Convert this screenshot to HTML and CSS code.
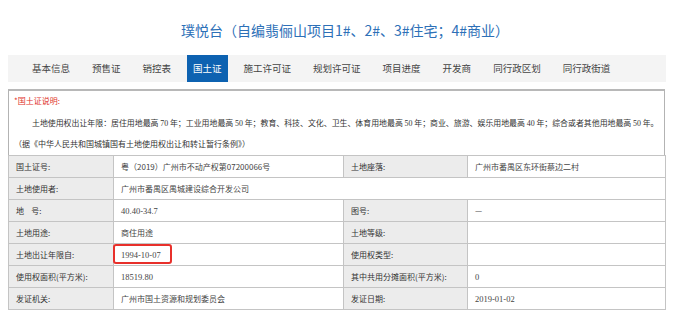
FILE: index.html
```html
<!DOCTYPE html>
<html lang="zh-CN">
<head>
    <meta charset="UTF-8">
    <title>璞悦台 国土证</title>
    <link rel="stylesheet" href="styles.css">
</head>
<body>
    <div class="page">
        <h1 class="title">璞悦台（自编翡俪山项目1#、2#、3#住宅；4#商业）</h1>

        <ul class="tabs">
            <li>基本信息</li>
            <li>预售证</li>
            <li>销控表</li>
            <li class="active">国土证</li>
            <li>施工许可证</li>
            <li>规划许可证</li>
            <li>项目进度</li>
            <li>开发商</li>
            <li>同行政区划</li>
            <li>同行政街道</li>
        </ul>

        <div class="panel">
            <div class="notes">
                <p class="note-title">*国土证说明:</p>
                <p class="note-rule">土地使用权出让年限：居住用地最高 <span class="num">70</span> 年；工业用地最高 <span class="num">50</span> 年；教育、科技、文化、卫生、体育用地最高 <span class="num">50</span> 年；商业、旅游、娱乐用地最高 <span class="num">40</span> 年；综合或者其他用地最高 <span class="num">50</span> 年。</p>
                <p class="note-source">（据《中华人民共和国城镇国有土地使用权出让和转让暂行条例》）</p>
            </div>

            <table class="info">
                <colgroup>
                    <col class="c1"><col class="c2"><col class="c3"><col class="c4">
                </colgroup>
                <tr>
                    <th>国土证号:</th>
                    <td>粤（2019）广州市不动产权第07200066号</td>
                    <th>土地座落:</th>
                    <td>广州市番禺区东环街蔡边二村</td>
                </tr>
                <tr>
                    <th>土地使用者:</th>
                    <td colspan="3">广州市番禺区禺城建设综合开发公司</td>
                </tr>
                <tr>
                    <th>地&nbsp;&nbsp;&nbsp;&nbsp;号:</th>
                    <td class="num">40.40-34.7</td>
                    <th>图号:</th>
                    <td>—</td>
                </tr>
                <tr>
                    <th>土地用途:</th>
                    <td>商住用途</td>
                    <th>土地等级:</th>
                    <td></td>
                </tr>
                <tr>
                    <th>土地出让年限自:</th>
                    <td class="num marked">1994-10-07<span class="mark"></span></td>
                    <th>使用权类型:</th>
                    <td></td>
                </tr>
                <tr>
                    <th>使用权面积(平方米):</th>
                    <td class="num">18519.80</td>
                    <th>其中共用分摊面积(平方米):</th>
                    <td class="num">0</td>
                </tr>
                <tr>
                    <th>发证机关:</th>
                    <td>广州市国土资源和规划委员会</td>
                    <th>发证日期:</th>
                    <td class="num">2019-01-02</td>
                </tr>
            </table>
        </div>
    </div>
</body>
</html>
```

FILE: styles.css
```css
body {
    margin: 0;
    background: #fff;
    font-family: "Noto Sans CJK SC", "Liberation Sans", sans-serif;
    color: #333;
}

.page {
    width: 700px;
    height: 319px;
    overflow: hidden;
}

.title {
    margin: 0 0 0 -10px;
    padding-top: 20px;
    height: 20px;
    line-height: 20px;
    text-align: center;
    font-size: 14px;
    font-weight: normal;
    color: #2d70b7;
}

.tabs {
    list-style: none;
    display: flex;
    margin: 15px 0 0 8px;
    padding: 0 0 0 13px;
    width: 645px;
    height: 27px;
    background-color: #f4f4f4;
}

.tabs li {
    padding: 0 6px;
    margin: 0 5px;
    line-height: 27px;
    font-size: 9.5px;
    color: #444;
    white-space: nowrap;
}

.tabs li.active {
    background-color: #0d62b1;
    color: #fff;
}

.panel {
    margin: 7px 0 0 8px;
    width: 655px;
    border: 1px solid #b3b3b3;
    border-top: 2px solid #b8b8b8;
}

.notes {
    padding: 0 6px 2px 5px;
    font-size: 8px;
    color: #333;
}

.notes p {
    margin: 0;
}

.note-title {
    height: 20px;
    line-height: 20px;
    color: #e0332c;
}

.note-rule {
    margin-top: 2px !important;
    line-height: 20px;
    text-indent: 18px;
    white-space: nowrap;
    font-size: 7.92px;
}

.note-source {
    line-height: 19px;
}

.num {
    font-family: "Liberation Serif", "Noto Sans CJK SC", serif;
}

.info {
    width: calc(100% + 2px);
    margin: 0 -1px -1px -1px;
    border-collapse: collapse;
    table-layout: fixed;
    font-size: 8px;
}

.info .c1 { width: 105px; }
.info .c2 { width: 230px; }
.info .c3 { width: 124px; }
.info .c4 { width: 198px; }

.info th,
.info td {
    height: 21px;
    padding: 0 7px;
    border: 1px solid #c4c4c4;
    text-align: left;
    white-space: nowrap;
}

.info th {
    font-weight: normal;
    background-color: #ececec;
    color: #333;
}

.info td {
    color: #444;
    background-color: #fff;
}

.info td.num {
    font-size: 8.5px;
}

.marked {
    position: relative;
}

.mark {
    position: absolute;
    left: -1px;
    top: 0;
    width: 55px;
    height: 16px;
    border: 2px solid #e8302b;
    border-radius: 3px;
}
```
